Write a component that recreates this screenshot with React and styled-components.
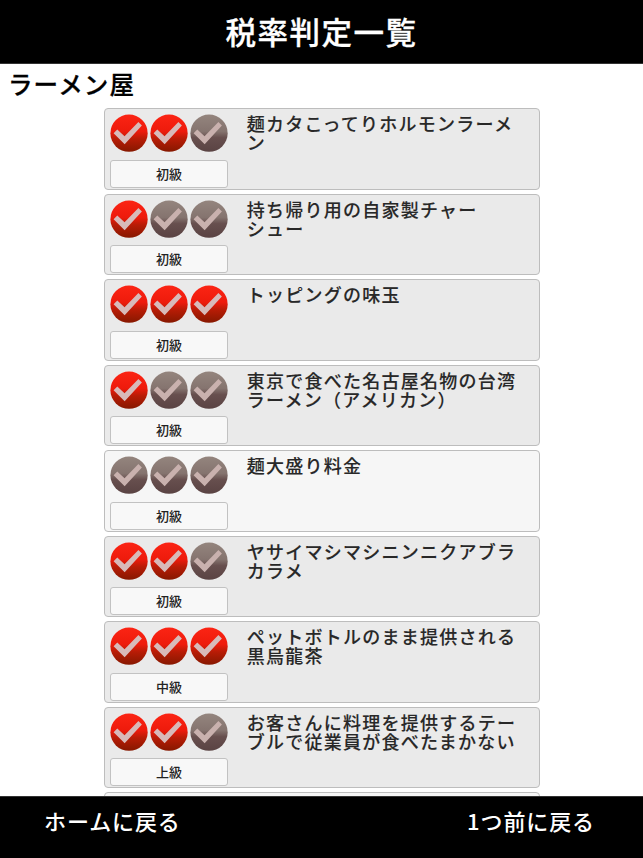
import React from 'react';
import styled, { createGlobalStyle } from 'styled-components';

const GlobalStyle = createGlobalStyle`
  body {
    margin: 0;
    background: #fff;
    font-family: 'Noto Sans CJK JP', sans-serif;
    font-weight: 500;
  }
`;

const Screen = styled.div`
  display: flex;
  flex-direction: column;
  height: 858px;
  overflow: hidden;
`;

const Header = styled.header`
  flex: none;
  height: 64px;
  box-sizing: border-box;
  border-bottom: 1px solid #333;
  background: #000;
  color: #fff;
  text-align: center;
`;

const Title = styled.h1`
  margin: 0;
  font-size: 30.5px;
  font-weight: 500;
  line-height: 62px;
  letter-spacing: 1.5px;
  -webkit-text-stroke: 0.3px;
`;

const Shop = styled.h2`
  flex: none;
  margin: 0;
  padding-left: 8px;
  height: 44px;
  font-size: 24.5px;
  font-weight: 500;
  line-height: 39px;
  letter-spacing: 1.1px;
  -webkit-text-stroke: 0.3px;
`;

const List = styled.ul`
  flex: 1;
  min-height: 0;
  display: flex;
  flex-direction: column;
  gap: 4px;
  margin: 0;
  padding: 0 103.5px 0 103.5px;
  overflow: hidden;
  list-style: none;
`;

const Card = styled.li`
  flex: none;
  display: flex;
  height: 81.5px;
  box-sizing: border-box;
  padding: 5px 20px 0 5.5px;
  border: 1px solid #bdbdbd;
  border-bottom-width: 1.5px;
  border-radius: 4px;
  background: ${props => (props.$fresh ? '#f6f6f6' : '#eaeaea')};
`;

const Status = styled.div`
  flex: none;
  width: 118px;
`;

const Marks = styled.div`
  display: flex;
  gap: 2.2px;
  height: 45.5px;
`;

const Mark = styled.svg`
  display: block;
  width: 38px;
  height: 38px;
`;

const Level = styled.div`
  height: 28px;
  box-sizing: border-box;
  border: 1px solid #c2c2c2;
  border-radius: 3px;
  background: #f8f8f8;
  color: #222;
  font-size: 13px;
  line-height: 25px;
  text-align: center;
`;

const Name = styled.p`
  margin: 0 0 0 18.7px;
  color: #282828;
  font-size: 18px;
  line-height: 19.3px;
  letter-spacing: 1.25px;
  white-space: pre;
  -webkit-text-stroke: 0.1px;
`;

const Footer = styled.footer`
  flex: none;
  display: flex;
  justify-content: space-between;
  height: 62px;
  box-sizing: border-box;
  padding: 0 48px 0 44px;
  border-top: 1px solid #333;
  background: #000;
`;

const FooterButton = styled.button`
  height: 46px;
  padding: 0;
  border: 0;
  background: none;
  color: #fff;
  font-family: inherit;
  font-size: 22px;
  font-weight: 500;
  line-height: 46px;
  letter-spacing: 0.9px;
`;

const items = [
  { name: '麺カタこってりホルモンラーメ\nン', level: '初級', score: 2 },
  { name: '持ち帰り用の自家製チャー\nシュー', level: '初級', score: 1 },
  { name: 'トッピングの味玉', level: '初級', score: 3 },
  {
    name: '東京で食べた名古屋名物の台湾\nラーメン（アメリカン）',
    level: '初級',
    score: 1
  },
  { name: '麺大盛り料金', level: '初級', score: 0 },
  { name: 'ヤサイマシマシニンニクアブラ\nカラメ', level: '初級', score: 2 },
  { name: 'ペットボトルのまま提供される\n黒烏龍茶', level: '中級', score: 3 },
  {
    name: 'お客さんに料理を提供するテー\nブルで従業員が食べたまかない',
    level: '上級',
    score: 2
  },
  { name: '', level: '', score: 0 }
];

const GradientDefs = styled.svg`
  display: block;
  width: 0;
  height: 0;
`;

const Gradients = () => (
  <GradientDefs>
    <defs>
      <linearGradient id="on" x1="0" y1="0" x2="0" y2="1">
        <stop offset="0" stopColor="#fb2414" />
        <stop offset="0.45" stopColor="#ee1b0c" />
        <stop offset="0.65" stopColor="#b81c06" />
        <stop offset="1" stopColor="#861800" />
      </linearGradient>
      <linearGradient id="off" x1="0" y1="0" x2="0" y2="1">
        <stop offset="0" stopColor="#94857e" />
        <stop offset="0.45" stopColor="#85746f" />
        <stop offset="0.62" stopColor="#674f4e" />
        <stop offset="1" stopColor="#5a4343" />
      </linearGradient>
    </defs>
  </GradientDefs>
);

const CheckMark = ({ on }) => (
  <Mark viewBox="0 0 38 38">
    <circle cx="19.1" cy="19.2" r="18.7" fill={on ? 'url(#on)' : 'url(#off)'} />
    <path
      d="M3.6 19.2L7.3 15.4L14.6 22.2L28.5 8L32 11.5L14.7 30.2Z"
      fill={on ? '#d8bab9' : '#c9b1ae'}
    />
  </Mark>
);

const App = () => (
  <Screen>
    <GlobalStyle />
    <Gradients />
    <Header>
      <Title>税率判定一覧</Title>
    </Header>
    <Shop>ラーメン屋</Shop>
    <List>
      {items.map(({ name, level, score }, index) => (
        <Card key={index} $fresh={score === 0}>
          <Status>
            <Marks>
              {[0, 1, 2].map(n => (
                <CheckMark key={n} on={n < score} />
              ))}
            </Marks>
            <Level>{level}</Level>
          </Status>
          <Name>{name}</Name>
        </Card>
      ))}
    </List>
    <Footer>
      <FooterButton>ホームに戻る</FooterButton>
      <FooterButton>1つ前に戻る</FooterButton>
    </Footer>
  </Screen>
);

export default App;
